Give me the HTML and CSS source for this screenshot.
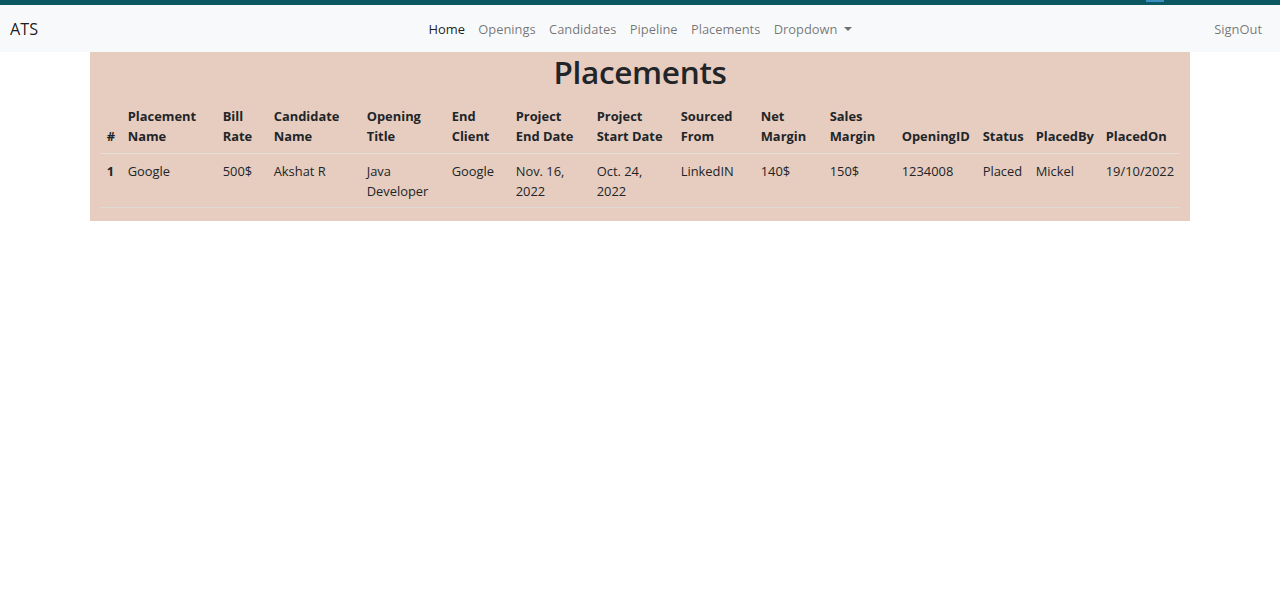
FILE: index.html
```html
<!DOCTYPE html>
<html lang="en">
<head>
<meta charset="utf-8">
<title>ATS - Placements</title>
<link rel="stylesheet" href="styles.css">
</head>
<body>
<div class="topband"><span class="topmark"></span></div>
<nav class="navbar">
  <div class="side"><a class="brand" href="#">ATS</a></div>
  <ul class="nav">
    <li><a class="nav-link active" href="#">Home</a></li>
    <li><a class="nav-link" href="#">Openings</a></li>
    <li><a class="nav-link" href="#">Candidates</a></li>
    <li><a class="nav-link" href="#">Pipeline</a></li>
    <li><a class="nav-link" href="#">Placements</a></li>
    <li><a class="nav-link dropdown" href="#">Dropdown<span class="caret"></span></a></li>
  </ul>
  <div class="side right"><a class="nav-link signout" href="#">SignOut</a></div>
</nav>
<main class="container">
  <h1 class="title">Placements</h1>
  <table class="table">
    <colgroup>
      <col class="c21"><col class="c95"><col class="c51"><col class="c93"><col class="c85">
      <col class="c64"><col class="c81"><col class="c84"><col class="c80"><col class="c69">
      <col class="c72"><col class="c81"><col class="c53"><col class="c70"><col class="c81">
    </colgroup>
    <thead>
      <tr>
        <th>#</th>
        <th>Placement Name</th>
        <th>Bill Rate</th>
        <th>Candidate Name</th>
        <th>Opening Title</th>
        <th>End Client</th>
        <th>Project End Date</th>
        <th>Project Start Date</th>
        <th>Sourced From</th>
        <th>Net Margin</th>
        <th>Sales Margin</th>
        <th class="nw">OpeningID</th>
        <th class="nw">Status</th>
        <th class="nw">PlacedBy</th>
        <th class="nw">PlacedOn</th>
      </tr>
    </thead>
    <tbody>
      <tr>
        <th>1</th>
        <td>Google</td>
        <td>500$</td>
        <td>Akshat R</td>
        <td>Java Developer</td>
        <td>Google</td>
        <td>Nov. 16, 2022</td>
        <td>Oct. 24, 2022</td>
        <td>LinkedIN</td>
        <td>140$</td>
        <td>150$</td>
        <td>1234008</td>
        <td class="nw">Placed</td>
        <td>Mickel</td>
        <td class="nw">19/10/2022</td>
      </tr>
    </tbody>
  </table>
</main>
</body>
</html>
```

FILE: styles.css
```css
* { box-sizing: border-box; }
html, body { margin: 0; padding: 0; }
body {
  font-family: "Open Sans", "Noto Sans", "Liberation Sans", sans-serif;
  font-size: 12.9px;
  line-height: 20px;
  color: #212529;
  background: #ffffff;
}
a { text-decoration: none; }

.topband {
  height: 5px;
  background: #0b5860;
  position: relative;
}
.topmark {
  position: absolute;
  left: 1146px;
  top: 0;
  width: 18px;
  height: 2px;
  background: #3a8fc0;
}

.navbar {
  height: 47px;
  background: #f8f9fa;
  display: flex;
  align-items: center;
  padding: 0 10px;
}
.side {
  flex: 1 1 0;
  min-width: 0;
}
.side.right {
  display: flex;
  justify-content: flex-end;
}
.brand {
  display: block;
  font-size: 16.2px;
  line-height: 25px;
  padding-top: 1px;
  color: rgba(0, 0, 0, 0.9);
}
.nav {
  list-style: none;
  margin: 0;
  padding: 0;
  display: flex;
}
.nav-link {
  display: block;
  padding: 6.7px 6.7px;
  color: rgba(0, 0, 0, 0.55);
}
.nav-link.active { color: rgba(0, 0, 0, 0.9); }
.caret {
  display: inline-block;
  margin-left: 6px;
  vertical-align: 3px;
  border-top: 4.5px solid rgba(0, 0, 0, 0.55);
  border-left: 4px solid transparent;
  border-right: 4px solid transparent;
}
.signout {
  padding-right: 8px;
}

.container {
  width: 1100px;
  margin: 0 auto;
  padding: 0 10px;
  background: #e7cdbf;
  display: flow-root;
}
.title {
  margin: 0 0 7.5px;
  font-size: 31.5px;
  line-height: 40px;
  font-weight: 600;
  text-align: center;
  letter-spacing: -0.3px;
}

.table {
  width: 1080px;
  table-layout: fixed;
  border-collapse: collapse;
  margin-bottom: 12.5px;
}
.table th, .table td {
  padding: 6.7px;
  text-align: left;
  vertical-align: bottom;
  border-bottom: 1px solid #dee2e6;
}
.table thead th { border-bottom: 1px solid #e4ded9; font-weight: 700; }
.table tbody th, .table tbody td { vertical-align: top; border-bottom-color: #dfdad6; }
.table tbody th { font-weight: 700; }
.table tbody td { font-weight: 400; }
.nw { white-space: nowrap; }

.c21 { width: 21px; }
.c95 { width: 95px; }
.c51 { width: 51px; }
.c93 { width: 93px; }
.c85 { width: 85px; }
.c64 { width: 64px; }
.c81 { width: 81px; }
.c84 { width: 84px; }
.c80 { width: 80px; }
.c69 { width: 69px; }
.c72 { width: 72px; }
.c53 { width: 53px; }
.c70 { width: 70px; }
```
